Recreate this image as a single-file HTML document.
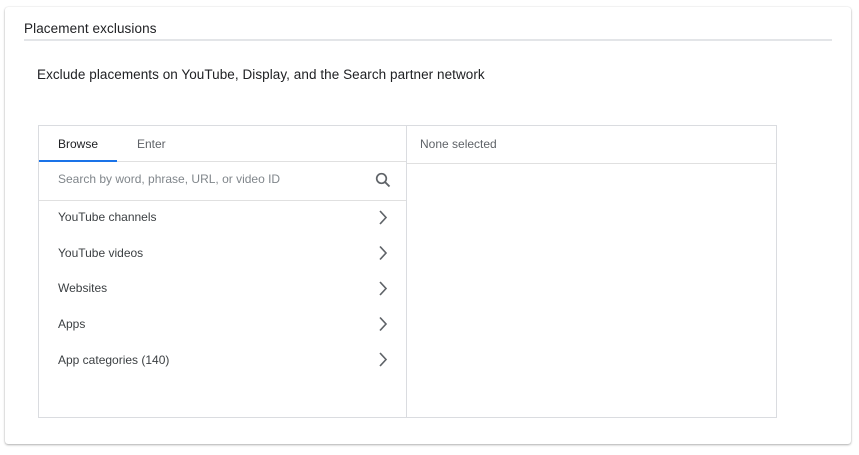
<!DOCTYPE html>
<html><head><style>
*{margin:0;padding:0;box-sizing:border-box}
body{width:859px;height:455px;background:#fff;font-family:"Liberation Sans",Arial,sans-serif;position:relative;overflow:hidden}
.card{position:absolute;left:5px;top:7px;width:846px;height:437px;border-radius:3px;box-shadow:0 1px 2px rgba(0,0,0,.3),0 0 1px rgba(0,0,0,.15);background:#fff}
.abs{position:absolute}
.t{font-size:13px;color:#202124;white-space:nowrap}
.g{font-size:12px;color:#3c4043;white-space:nowrap}
</style></head><body>
<div class="card"></div>
<div class="abs t" style="left:24px;top:21px;font-size:13.5px;letter-spacing:0.1px">Placement exclusions</div>
<div class="abs" style="left:24px;top:39px;width:808px;height:2px;background:#e3e5e8"></div>
<div class="abs t" style="left:37px;top:67px;font-size:13.5px;letter-spacing:0.06px">Exclude placements on YouTube, Display, and the Search partner network</div>
<div class="abs" style="left:38px;top:125px;width:739px;height:293px;border:1px solid #dadce0"></div>
<div class="abs" style="left:406px;top:125px;width:1px;height:293px;background:#dadce0"></div>
<div class="abs" style="left:39px;top:161px;width:367px;height:1px;background:#e0e0e0"></div>
<div class="abs" style="left:39px;top:160px;width:78px;height:2px;background:#1a73e8"></div>
<div class="abs" style="left:407px;top:163px;width:369px;height:1px;background:#e0e0e0"></div>
<div class="abs" style="left:39px;top:200px;width:367px;height:1px;background:#e0e0e0"></div>
<div class="abs g" style="left:58px;top:137px;color:#202124">Browse</div>
<div class="abs g" style="left:137px;top:137px;color:#5f6368">Enter</div>
<div class="abs g" style="left:420px;top:137px;color:#5f6368">None selected</div>
<div class="abs g" style="left:58px;top:172px;color:#80868b">Search by word, phrase, URL, or video ID</div>
<svg class="abs" style="left:374px;top:171px" width="18" height="18" viewBox="0 0 18 18"><circle cx="7.5" cy="7.5" r="4.8" fill="none" stroke="#5f6368" stroke-width="1.7"/><line x1="11" y1="11" x2="15.5" y2="15.5" stroke="#5f6368" stroke-width="1.9"/></svg>
<div class="abs g" style="left:58px;top:210px">YouTube channels</div>
<div class="abs g" style="left:58px;top:246px">YouTube videos</div>
<div class="abs g" style="left:58px;top:281px">Websites</div>
<div class="abs g" style="left:58px;top:317px">Apps</div>
<div class="abs g" style="left:58px;top:353px">App categories (140)</div>
<svg class="abs" style="left:376px;top:209px" width="14" height="160" viewBox="0 0 14 160">
<g fill="none" stroke="#5f6368" stroke-width="1.6">
<path d="M4 2l6 6.5-6 6.5"/><path d="M4 37.5l6 6.5-6 6.5"/><path d="M4 73l6 6.5-6 6.5"/><path d="M4 108.5l6 6.5-6 6.5"/><path d="M4 144l6 6.5-6 6.5"/></g></svg>
</body></html>
